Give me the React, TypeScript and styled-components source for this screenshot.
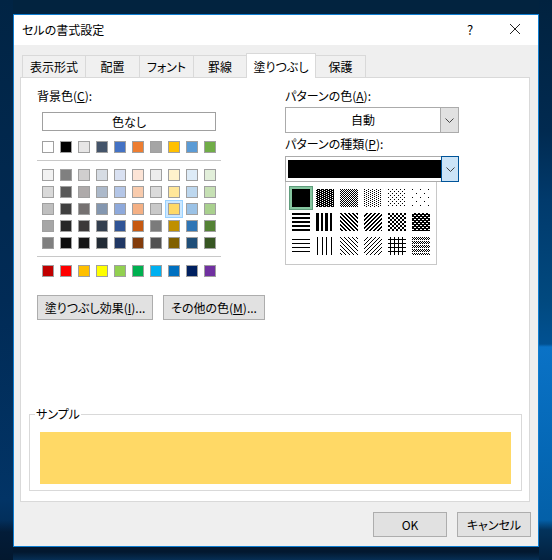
import styled, { createGlobalStyle } from 'styled-components'

const GlobalStyle = createGlobalStyle`
  html, body {
    margin: 0;
    padding: 0;
  }
  body {
    font-family: "Noto Sans CJK JP", "Liberation Sans", sans-serif;
    font-size: 12px;
    color: #000;
  }
`

const themeColors = ['#ffffff', '#000000', '#e7e6e6', '#44546a', '#4472c4', '#ed7d31', '#a5a5a5', '#ffc000', '#5b9bd5', '#70ad47']

const shadeRows = [
  ['#f2f2f2', '#808080', '#d0cece', '#d6dce4', '#d9e1f2', '#fce4d6', '#ededed', '#fff2cc', '#ddebf7', '#e2efda'],
  ['#d9d9d9', '#595959', '#aeaaaa', '#acb9ca', '#b4c6e7', '#f8cbad', '#dbdbdb', '#ffe699', '#bdd7ee', '#c6e0b4'],
  ['#bfbfbf', '#404040', '#757171', '#8497b0', '#8ea9db', '#f4b084', '#c9c9c9', '#ffd966', '#9bc2e6', '#a9d08e'],
  ['#a6a6a6', '#262626', '#3b3838', '#333f4f', '#305496', '#c65911', '#7b7b7b', '#bf8f00', '#2f75b5', '#548235'],
  ['#808080', '#0d0d0d', '#161616', '#222b35', '#203764', '#833c0c', '#525252', '#806000', '#1f4e78', '#375623'],
]

const standardColors = ['#c00000', '#ff0000', '#ffc000', '#ffff00', '#92d050', '#00b050', '#00b0f0', '#0070c0', '#002060', '#7030a0']

const tabs = ['表示形式', '配置', 'フォント', '罫線', '塗りつぶし', '保護']
const tabWidths = [64, 55, 55, 54, 70, 51]

// each tile is repeated over the 18x18 swatch, '1' is a black pixel
const patternTiles: string[][] = [
  ['1'],
  ['0111', '1101'],
  ['10', '01'],
  ['1000', '0010'],
  ['1000', '0000', '0010', '0000'],
  ['10000000', '00000000', '00000000', '00000000', '00001000', '00000000', '00000000', '00000000'],
  ['1', '1', '0', '0'],
  ['111001100'],
  ['1100', '0110', '0011', '1001'],
  ['0011', '0110', '1100', '1001'],
  ['1100', '1100', '0011', '0011'],
  ['0011', '1111', '1100', '1111'],
  ['0', '0', '1', '0'],
  ['010000100'],
  ['1000', '0100', '0010', '0001'],
  ['0001', '0010', '0100', '1000'],
  ['0010', '0010', '1111', '0010'],
  ['1010', '0101', '1010', '0000'],
]

const Desktop = styled.div`
  width: 552px;
  height: 560px;
  box-sizing: border-box;
  padding: 14px 13px;
  overflow: hidden;
  background:
    linear-gradient(180deg, #01223f 0, #012a50 130px, #013a6c 200px, #01497f 300px, #015192 344px, #0a72c6 347px, #0568b6 450px, #0460a8 520px, #03335c 530px, #03213f 560px) right top / 13px 100% no-repeat,
    linear-gradient(180deg, #012444 0, #012b56 300px, #023466 500px, #022f5c 520px, #031c38 532px, #03182f 560px) left top / 13px 100% no-repeat,
    linear-gradient(180deg, #02233f 0, #02233f 40px, #03182f 530px, #03182f 552px, #062f55 560px);
`

const Window = styled.div`
  width: 526px;
  height: 533px;
  box-sizing: border-box;
  display: flex;
  flex-direction: column;
  background: #efefef;
  border: 1px solid #0f7dd0;
`

const TitleBar = styled.div`
  height: 30px;
  flex: none;
  box-sizing: border-box;
  display: flex;
  align-items: center;
  background: #fff;
  padding: 0 17px 2px 8px;
`

const Title = styled.div`
  flex: 1;
  font-size: 12px;
  font-feature-settings: "palt";
`

const HelpMark = styled.div`
  width: 12px;
  margin-right: 33px;
  text-align: center;
  font-size: 13px;
`

const Body = styled.div`
  flex: 1;
  display: flex;
  flex-direction: column;
  padding: 8px 7px 0 6px;
`

const TabBar = styled.div`
  display: flex;
  align-items: flex-start;
  height: 24px;
  flex: none;
  padding-left: 2px;
`

const Tab = styled.div<{ $active?: boolean; $width: number }>`
  width: ${(p) => p.$width}px;
  height: ${(p) => (p.$active ? 25 : 23)}px;
  box-sizing: border-box;
  margin-top: ${(p) => (p.$active ? 0 : 2)}px;
  margin-right: -1px;
  padding-bottom: ${(p) => (p.$active ? 0 : 1)}px;
  display: flex;
  align-items: center;
  justify-content: center;
  font-feature-settings: "palt";
  background: ${(p) => (p.$active ? '#fff' : '#f0f0f0')};
  border: 1px solid #d9d9d9;
  border-bottom: ${(p) => (p.$active ? 'none' : '1px solid #d9d9d9')};
  position: relative;
  z-index: ${(p) => (p.$active ? 2 : 0)};
`

const Panel = styled.div`
  position: relative;
  z-index: 1;
  width: 510px;
  height: 425px;
  box-sizing: border-box;
  flex: none;
  display: flex;
  flex-direction: column;
  background: #fff;
  border: 1px solid #d9d9d9;
`

const Columns = styled.div`
  display: grid;
  grid-template-columns: 248px 174px;
  padding: 10px 0 0 16px;
`

const Column = styled.div`
  position: relative;
`

const Label = styled.div<{ $gap?: number }>`
  height: 16px;
  line-height: 16px;
  margin-top: ${(p) => p.$gap ?? 0}px;
  font-feature-settings: "palt";
`

const NoColorButton = styled.div`
  width: 174px;
  height: 19px;
  box-sizing: border-box;
  margin: 8px 0 0 5px;
  padding-bottom: 1px;
  display: flex;
  align-items: center;
  justify-content: center;
  border: 1px solid #a0a0a0;
  font-feature-settings: "palt";
`

const SwatchRow = styled.div<{ $gap?: number }>`
  display: flex;
  gap: 6px;
  margin: ${(p) => p.$gap ?? 0}px 0 0 5px;
`

const SwatchStack = styled.div`
  display: flex;
  flex-direction: column;
  gap: 5px;
  margin-top: 8px;
`

const Swatch = styled.div<{ $color: string; $selected?: boolean }>`
  width: 12px;
  height: 12px;
  box-sizing: border-box;
  background: ${(p) => p.$color};
  border: 1px solid #a0a0a0;
  box-shadow: ${(p) => (p.$selected ? '0 0 0 2px #cce8ff, 0 0 0 3px #99d1ff' : 'none')};
`

const Separator = styled.div<{ $gap: number }>`
  width: 184px;
  height: 1px;
  margin-top: ${(p) => p.$gap}px;
  background: #c8c8c8;
`

const ButtonRow = styled.div`
  display: flex;
  gap: 10px;
  margin-top: 18px;
`

const PushButton = styled.div<{ $width: number }>`
  width: ${(p) => p.$width}px;
  height: 25px;
  box-sizing: border-box;
  display: flex;
  align-items: center;
  justify-content: center;
  background: #e1e1e1;
  border: 1px solid #adadad;
  font-feature-settings: "palt";
`

const Combo = styled.div<{ $gap: number }>`
  width: 174px;
  height: 26px;
  box-sizing: border-box;
  margin-top: ${(p) => p.$gap}px;
  display: flex;
  border: 1px solid #ababab;
  background: #fff;
`

const ComboValue = styled.div`
  flex: 1;
  padding-bottom: 2px;
  display: flex;
  align-items: center;
  justify-content: center;
`

const ComboFill = styled.div`
  flex: 1;
  margin: 3px 0 3px 2px;
  background: #000;
`

const ComboArrow = styled.div<{ $open?: boolean }>`
  width: 18px;
  margin: ${(p) => (p.$open ? '-1px -1px -1px 0' : '0')};
  flex: none;
  box-sizing: border-box;
  display: flex;
  align-items: center;
  justify-content: center;
  background: ${(p) => (p.$open ? '#cce4f7' : '#e1e1e1')};
  border-left: 1px solid ${(p) => (p.$open ? '#005499' : '#ababab')};
  border-top: ${(p) => (p.$open ? '1px solid #005499' : 'none')};
  border-right: ${(p) => (p.$open ? '1px solid #005499' : 'none')};
  border-bottom: ${(p) => (p.$open ? '1px solid #005499' : 'none')};
`

const PatternMenu = styled.div`
  position: absolute;
  left: 0;
  top: 94px;
  width: 152px;
  height: 83px;
  box-sizing: border-box;
  padding: 7px 0 0 6px;
  display: grid;
  grid-template-columns: repeat(6, 18px);
  grid-auto-rows: 18px;
  gap: 6px;
  background: #fff;
  border: 1px solid #c8c8c8;
  border-top: none;
`

const PatternCell = styled.div<{ $selected?: boolean }>`
  width: 18px;
  height: 18px;
  box-shadow: ${(p) => (p.$selected ? '0 0 0 2px #86c6a0, 0 0 0 3px #5f9d7c' : 'none')};
`

const SampleBox = styled.div`
  position: relative;
  margin: auto 7px 10px 8px;
  height: 77px;
  box-sizing: border-box;
  padding: 17px 10px 6px;
  border: 1px solid #d9d9d9;
`

const SampleLegend = styled.div`
  position: absolute;
  left: 5px;
  top: -9px;
  padding: 0 1px;
  line-height: 16px;
  background: #fff;
  font-feature-settings: "palt";
`

const SampleFill = styled.div`
  height: 100%;
  background: #ffd966;
`

const Footer = styled.div`
  flex: 1;
  display: flex;
  justify-content: flex-end;
  gap: 10px;
  padding: 10px 0 0 0;
  align-items: flex-start;
`

function Chevron() {
  return (
    <svg width="9" height="5" viewBox="0 0 9 5">
      <path d="M0.5 0.5 L4.5 4.5 L8.5 0.5" fill="none" stroke="#444" strokeWidth="1" />
    </svg>
  )
}

function CloseIcon() {
  return (
    <svg width="12" height="12" viewBox="0 0 12 12">
      <path d="M1 1 L11 11 M11 1 L1 11" fill="none" stroke="#222" strokeWidth="1" />
    </svg>
  )
}

function PatternSwatch({ tile }: { tile: string[] }) {
  const cells: React.ReactElement[] = []
  for (let y = 0; y < 18; y++) {
    const row = tile[y % tile.length]
    for (let x = 0; x < 18; x++) {
      if (row[x % row.length] === '1') {
        cells.push(<rect key={`${x}-${y}`} x={x} y={y} width="1" height="1" />)
      }
    }
  }
  return (
    <svg width="18" height="18" viewBox="0 0 18 18" shapeRendering="crispEdges" style={{ display: 'block' }}>
      {cells}
    </svg>
  )
}

export default function App() {
  return (
    <Desktop>
      <GlobalStyle />
      <Window>
        <TitleBar>
          <Title>セルの書式設定</Title>
          <HelpMark>?</HelpMark>
          <CloseIcon />
        </TitleBar>
        <Body>
          <TabBar>
            {tabs.map((t, i) => (
              <Tab key={t} $active={i === 4} $width={tabWidths[i]}>{t}</Tab>
            ))}
          </TabBar>
          <Panel>
            <Columns>
              <Column>
                <Label>背景色(<u>C</u>):</Label>
                <NoColorButton>色なし</NoColorButton>
                <SwatchRow $gap={10}>
                  {themeColors.map((c) => <Swatch key={c} $color={c} />)}
                </SwatchRow>
                <Separator $gap={7} />
                <SwatchStack>
                  {shadeRows.map((row, r) => (
                    <SwatchRow key={r}>
                      {row.map((c, i) => <Swatch key={c + i} $color={c} $selected={c === '#ffd966'} />)}
                    </SwatchRow>
                  ))}
                </SwatchStack>
                <Separator $gap={7} />
                <SwatchRow $gap={8}>
                  {standardColors.map((c) => <Swatch key={c} $color={c} />)}
                </SwatchRow>
                <ButtonRow>
                  <PushButton $width={116}>塗りつぶし効果(<u>I</u>)...</PushButton>
                  <PushButton $width={102}>その他の色(<u>M</u>)...</PushButton>
                </ButtonRow>
              </Column>
              <Column>
                <Label>パターンの色(<u>A</u>):</Label>
                <Combo $gap={3}>
                  <ComboValue>自動</ComboValue>
                  <ComboArrow><Chevron /></ComboArrow>
                </Combo>
                <Label $gap={3}>パターンの種類(<u>P</u>):</Label>
                <Combo $gap={4}>
                  <ComboFill />
                  <ComboArrow $open><Chevron /></ComboArrow>
                </Combo>
                <PatternMenu>
                  {patternTiles.map((tile, i) => (
                    <PatternCell key={i} $selected={i === 0}>
                      <PatternSwatch tile={tile} />
                    </PatternCell>
                  ))}
                </PatternMenu>
              </Column>
            </Columns>
            <SampleBox>
              <SampleLegend>サンプル</SampleLegend>
              <SampleFill />
            </SampleBox>
          </Panel>
          <Footer>
            <PushButton $width={74}>OK</PushButton>
            <PushButton $width={74}>キャンセル</PushButton>
          </Footer>
        </Body>
      </Window>
    </Desktop>
  )
}
